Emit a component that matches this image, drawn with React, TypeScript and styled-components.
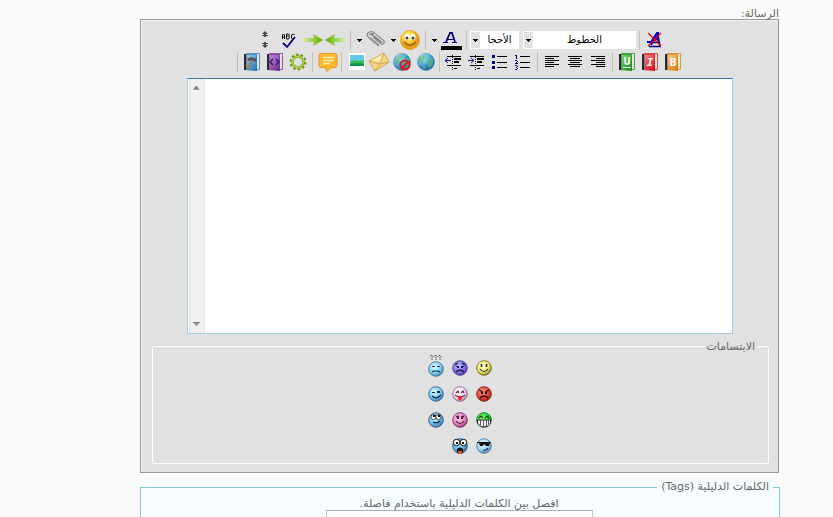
import React from "react";
import styled, { createGlobalStyle } from "styled-components";

const GlobalStyle = createGlobalStyle`
  * { box-sizing: border-box; }
  body {
    margin: 0;
    background: #fafafa;
    color: #666;
    font: 11px/14px "DejaVu Sans", Tahoma, sans-serif;
  }
`;

const Page = styled.main`
  height: 100vh;
  overflow: hidden;
  padding: 7px 53px 0 140px;
`;

const FieldLabel = styled.label`
  display: block;
  height: 12px;
  padding-right: 1px;
`;

const Editor = styled.section`
  margin-right: 1px;
  padding: 9px 8px 8px 10px;
  background: #e1e1e1;
  border: 1px solid #999;
  box-shadow: 1px 1px 0 #fff, inset 1px 1px 0 #f4f4f4;
`;

const ToolRow = styled.div<{ $start?: number; $end?: number }>`
  display: flex;
  justify-content: center;
  align-items: center;
  height: 22px;
  padding-right: ${(p) => p.$start ?? 0}px;
  padding-left: ${(p) => p.$end ?? 0}px;
`;

const ToolButton = styled.button<{ $w?: number }>`
  flex: none;
  width: ${(p) => p.$w ?? 23}px;
  height: 22px;
  padding: 0;
  border: 0;
  background: none;
  svg { display: block; }
`;

const Divider = styled.span<{ $w?: number }>`
  flex: none;
  display: flex;
  justify-content: center;
  width: ${(p) => p.$w ?? 6}px;
  height: 20px;
  &::before { content: ""; width: 1px; background: #c2c1b4; }
`;

const Picker = styled.label<{ $w: number }>`
  flex: none;
  display: flex;
  align-items: center;
  width: ${(p) => p.$w}px;
  height: 18px;
  padding-left: 1px;
  background: #fff;
  svg { flex: none; background: #e1e1e1; }
`;

const PickerSelect = styled.select`
  appearance: none;
  flex: 1;
  min-width: 0;
  height: 18px;
  padding: 0;
  border: 0;
  background: none;
  color: #000;
  font: 10px/16px "DejaVu Sans", Tahoma, sans-serif;
  text-align: center;
  text-align-last: center;
`;

const PickerGap = styled.span`
  width: 4px;
`;

const TextFrame = styled.div`
  display: flex;
  height: 256px;
  margin: 5px 37px 0 36px;
  background: #fff;
  border: 1px solid #a6cbe3;
  border-top-color: #3d7bad;
`;

const MessageArea = styled.textarea`
  flex: 1;
  min-width: 0;
  padding: 4px;
  border: 0;
  outline: 0;
  resize: none;
  overflow: hidden;
  background: #fff;
  font: inherit;
`;

const ScrollTrack = styled.div`
  display: flex;
  flex-direction: column;
  justify-content: space-between;
  align-items: center;
  width: 17px;
  padding: 6px 0;
  background: linear-gradient(90deg, #fff 1px, #e5e5e5 1px, #f0f0f0 4px, #f0f0f0 15px, #e8e8e8);
`;

const SmileyBox = styled.fieldset`
  min-width: 0;
  margin: 6px 1px 0;
  padding: 3px 15px 4px 13px;
  border: 1px solid #fff;
  border-radius: 2px;
  box-shadow: 0 0 0 1px #d5dfe8;
`;

const SmileyLegend = styled.legend`
  height: 12px;
  margin-right: -4px;
  padding: 0 2px;
  background: #e1e1e1;
`;

const SmileyGrid = styled.div`
  display: grid;
  grid-template-columns: repeat(3, 24px);
  grid-auto-rows: 26px;
  justify-content: center;
`;

const SmileyButton = styled.button`
  padding: 0;
  border: 0;
  background: none;
  svg { display: block; margin: 0 auto; }
`;

const TagsBox = styled.fieldset`
  min-width: 0;
  margin: 7px 0 0;
  padding: 3px 12px 12px 10px;
  background: #f7fdff;
  border: 1px solid #82cbd6;
  box-shadow: 0 -7px 0 #f8fcfd;
`;

const TagsLegend = styled.legend`
  height: 14px;
  margin-right: -6px;
  padding: 0 4px;
  background: #f7fdff;
`;

const TagsField = styled.label`
  display: flex;
  flex-direction: column;
  align-items: center;
  height: 40px;
`;

const TagsInput = styled.input`
  width: 267px;
  height: 22px;
  margin-top: -1px;
  border: 1px solid #c5c9cf;
  border-top-color: #abadb3;
  background: #fff;
`;

const Glyph = ({ children, w = 23 }: { children: React.ReactNode; w?: number }) => (
  <svg width={w} height="22" viewBox={`0 0 ${w} 22`} aria-hidden="true">{children}</svg>
);

const Tool = ({ label, w, children }: { label: string; w?: number; children: React.ReactNode }) => (
  <ToolButton type="button" aria-label={label} title={label} $w={w}>
    <Glyph w={w}>{children}</Glyph>
  </ToolButton>
);

const DropArrow = ({ label }: { label: string }) => (
  <Tool label={label} w={11}><path d="M3 10h5v1H7v1H6v1H5v-1H4v-1H3z" fill="#000" /></Tool>
);

const Gradient = ({ id, from, to }: { id: string; from: string; to: string }) => (
  <linearGradient id={id} x1="0" y1="0" x2="0.8" y2="1">
    <stop offset="0" stopColor={from} /><stop offset="1" stopColor={to} />
  </linearGradient>
);

const Book = ({ id, from, to, children }: { id: string; from: string; to: string; children: React.ReactNode }) => (
  <>
    <defs><Gradient id={id} from={from} to={to} /></defs>
    <path d="M6 2.500H19.500V18.500H17" fill="#e4e4dc" stroke={to} strokeOpacity=".75" />
    <path d="M4 3h13v17L4 19z" fill={`url(#${id})`} />
    <path d="M4 3.500h12.500V20" fill="none" stroke={to} strokeOpacity=".65" />
    <path d="M4 3h2v16H4z" fill="#2c2c2c" />
    <path d="M6.500 3v16" stroke="#777" strokeOpacity=".7" />
    {children}
  </>
);

const letterProps = {
  x: 12,
  textAnchor: "middle" as const,
  fontFamily: "DejaVu Sans Mono, monospace",
  fontWeight: 700,
  fontSize: 11,
  fill: "#fff",
};

const linesFor = (rows: number[][]) =>
  rows.map(([x, y, w], i) => <rect key={i} x={x} y={y} width={w} height="1" fill="#000" />);

const IndentLines = () => (
  <>
    <path d="M10.500 4v15" stroke="#111" strokeDasharray="1 1" />
    {linesFor([[5, 5, 14], [12, 7, 7], [12, 8, 7], [12, 10, 5], [12, 11, 5], [5, 14, 14], [12, 17, 3]])}
  </>
);

const Globe = ({ x = 0 }: { x?: number }) => (
  <g transform={`translate(${x} 0)`}>
    <defs>
      <radialGradient id={`globe${x}`} cx=".3" cy=".25" r=".75">
        <stop offset="0" stopColor="#d8f6ff" /><stop offset=".45" stopColor="#5bb9e4" /><stop offset="1" stopColor="#15649f" />
      </radialGradient>
    </defs>
    <circle cx="11" cy="11" r="8.500" fill={`url(#globe${x})`} stroke="#4a92bd" strokeWidth=".7" />
    <path d="M4 7l4-3 4 1-1 3-3 1 1 3-2 1-3-2zM12 10l4-4 2 2v6l-4 4-1-4zM7 14l3 1v3l-2-1z" fill="#5eb67c" opacity=".7" />
  </g>
);

const SmileGlyph = () => (
  <>
    <defs>
      <radialGradient id="bigSmile" cx=".4" cy=".3">
        <stop offset="0" stopColor="#fff8a4" /><stop offset=".55" stopColor="#ffd53d" /><stop offset="1" stopColor="#e99b11" />
      </radialGradient>
    </defs>
    <circle cx="11" cy="11" r="9.500" fill="url(#bigSmile)" stroke="#df9c28" strokeWidth=".8" />
    <ellipse cx="8" cy="8" rx="2.400" ry="3" fill="#fff" /><ellipse cx="14" cy="8" rx="2.400" ry="3" fill="#fff" />
    <circle cx="8" cy="9" r="1.500" fill="#345" /><circle cx="14" cy="9" r="1.500" fill="#345" />
    <path d="M5 13q6 6 12 0" fill="none" stroke="#975914" strokeWidth="1.300" />
  </>
);

const Caret = ({ up = false }: { up?: boolean }) => (
  <svg width="9" height="6" viewBox="0 0 9 6" aria-hidden="true">
    <path d={up ? "M1 5h7L5 1H4z" : "M1 1h7L5 5H4z"} fill="#999" />
    <path d={up ? "M2 4h3V1H4z" : "M1 1h7v1H1z"} fill="#777" />
  </svg>
);

type Face = { name: string; hi: string; mid: string; edge: string; art: React.ReactNode };
const line = { fill: "none", stroke: "#102344", strokeWidth: 1.2 };

const faces: Face[] = [
  { name: "smile", hi: "#ffffd5", mid: "#f4ec65", edge: "#756c20", art: <><path d="M5.500 4v3M10.500 4v3" stroke="#222" strokeWidth="1.500" /><path d="M4 9q4 5 8 0" {...line} /></> },
  { name: "sad", hi: "#c4bdff", mid: "#8270e3", edge: "#4b3995", art: <><path d="M3 5l3-2M10 3l3 2M4 6.500h3M9 6.500h3M4 12q4-4 8 0" {...line} /><path d="M5 6h2v2H5zM9 6h2v2H9z" fill="#182067" /></> },
  { name: "confused", hi: "#e2fcff", mid: "#7bd4f3", edge: "#3d7797", art: <><path d="M4 5.500h3M9 5.500h3M4 11l2-1h4l2 1" {...line} /></> },
  { name: "angry", hi: "#ff9885", mid: "#e34637", edge: "#851f16", art: <><path d="M3 4l4 2M9 6l4-2M4 12q4-4 8 0" {...line} stroke="#3b0905" /><path d="M5 6h2v2H5zM9 6h2v2H9z" fill="#280603" /></> },
  { name: "tongue", hi: "#fff", mid: "#f8ddf2", edge: "#92688e", art: <><path d="M4 7l2-2 1 2M9 7l2-2 1 2M3 9q5 4 10 0" {...line} stroke="#51314e" /><path d="M6 10h4v2l-1 2H7l-1-2z" fill="#ef171a" /></> },
  { name: "wink", hi: "#e1faff", mid: "#74c6f0", edge: "#346e98", art: <><path d="M4 6.500h3M4 10q4 4 9-1" {...line} /><path d="M9 5h3v2H9z" fill="#10233e" /></> },
  { name: "grin", hi: "#83ff65", mid: "#28ce36", edge: "#127a24", art: <><path d="M3 6l2-2 2 2M9 6l2-2 2 2" {...line} stroke="#104b18" /><path d="M1.500 8h13v3q-2 4-6.500 4t-6.500-4z" fill="#fff" stroke="#342b38" /><path d="M4.500 8v5M7.500 8v7M10.500 8v6M12.500 8v4" stroke="#342b38" strokeWidth=".8" /></> },
  { name: "blush", hi: "#ffcfec", mid: "#e886c3", edge: "#7b355f", art: <><path d="M4 5l2-1 1 1M9 5l2-1 1 1M4 9q4 5 8 0" {...line} stroke="#4a1937" /><path d="M5 5h2v2H5zM9 5h2v2H9z" fill="#541b41" /></> },
  { name: "rolleyes", hi: "#d9f6ff", mid: "#6ebcec", edge: "#346391", art: <><ellipse cx="5.500" cy="5" rx="2.500" ry="2.500" fill="#fff" stroke="#111" strokeWidth=".7" /><ellipse cx="10.500" cy="5" rx="2.500" ry="2.500" fill="#fff" stroke="#111" strokeWidth=".7" /><path d="M5 3h2v2H5zM10 3h2v2h-2z" fill="#111" /><path d="M5 10q4 2 7-1" {...line} /></> },
  { name: "cool", hi: "#f4ffff", mid: "#9dd1f5", edge: "#557ca0", art: <><path d="M1 4h14v1h-1l-1 3h-3L8 6 7 8H4L3 5H1z" fill="#111" /><path d="M7 12q3 1 5-2" {...line} /></> },
  { name: "shock", hi: "#b2e6ff", mid: "#66b2df", edge: "#285a82", art: <><circle cx="4.500" cy="4.500" r="3.200" fill="#fff" stroke="#111" /><circle cx="11.500" cy="4.500" r="3.200" fill="#fff" stroke="#111" /><path d="M4 4h2v2H4zM10 4h2v2h-2zM5 11q3-3 6 0v3l-2 2H7l-2-2z" fill="#111" /><path d="M6 13h4v1l-1 2H7l-1-2z" fill="#f25a21" /></> },
];

const Smiley = ({ face }: { face: Face }) => (
  <SmileyButton type="button" aria-label={face.name}>
    <svg width="24" height="26" viewBox="0 0 24 26">
      <defs>
        <radialGradient id={`face-${face.name}`} cx=".4" cy=".35" r=".7">
          <stop offset="0" stopColor={face.hi} /><stop offset=".6" stopColor={face.mid} /><stop offset="1" stopColor={face.edge} />
        </radialGradient>
      </defs>
      <g transform={face.name === "confused" ? "translate(4 6)" : "translate(4 5)"}>
        <circle cx="8" cy="8" r="7.300" fill={`url(#face-${face.name})`} stroke={face.edge} strokeWidth=".9" />
        {face.art}
      </g>
      {face.name === "confused" && (
        <path d="M6 1.500l1-1h1l1 1-1 1v1M10 1.500l1-1h1l1 1-1 1v1M14 1.500l1-1h1l1 1-1 1v1M8 4v1M12 4v1M16 4v1" fill="none" stroke="#333" strokeWidth=".8" />
      )}
    </svg>
  </SmileyButton>
);

const SelectBox = ({ label, text, w }: { label: string; text: string; w: number }) => (
  <Picker $w={w} dir="rtl">
    <PickerSelect aria-label={label}><option>{text}</option></PickerSelect>
    <svg width="9" height="16" viewBox="0 0 9 16" aria-hidden="true">
      <path d="M2 7h5v1H6v1H5v1H4V9H3V8H2z" fill="#000" />
    </svg>
  </Picker>
);

export default function App() {
  return (
    <Page dir="rtl">
      <GlobalStyle />
      <FieldLabel htmlFor="message">الرسالة:</FieldLabel>
      <Editor>
        <ToolRow $end={2}>
          <Tool label="إزالة التنسيق">
            <path d="M4 13h4l6-9h1v8M9 10h6" fill="none" stroke="#0000f0" strokeWidth="2" />
            <path d="M8 16l6-9h1l2 10M10 13.500h6M6 17.500h12" fill="none" stroke="#00008c" strokeWidth="1.600" />
            <path d="M5 4l13 13M18 4L5 17" stroke="#e80000" strokeWidth="1.200" />
          </Tool>
          <Divider $w={7} />
          <SelectBox label="الخطوط" text="الخطوط" w={113} />
          <PickerGap />
          <SelectBox label="الأحجام" text="الأحجا" w={49} />
          <Divider $w={7} />
          <Tool label="لون النص">
            <path d="M6 13l4-9h2l3 9" fill="none" stroke="#00007d" strokeWidth="1.800" />
            <path d="M7 10.500h7M3 13.500h5M12 13.500h5M9 3.500h4" stroke="#00007d" />
            <path d="M1 17h21v4H1z" fill="#000" />
          </Tool>
          <DropArrow label="قائمة الألوان" />
          <Divider $w={7} />
          <Tool label="ابتسامات"><SmileGlyph /></Tool>
          <DropArrow label="قائمة الابتسامات" />
          <Tool label="مرفقات">
            <path d="M8 8l8 7q2 1 3-1t-1-3L8 3Q5 2 3 4t1 5l10 8M6 5l11 9M4 6l5-2" fill="none" stroke="#8b8b8b" strokeWidth="1.300" />
            <path d="M5 4l12 9M5 8l9 8" fill="none" stroke="#555" strokeWidth=".6" />
          </Tool>
          <DropArrow label="قائمة المرفقات" />
          <Divider $w={7} />
          <Tool label="من اليمين إلى اليسار" w={22}>
            <defs><linearGradient id="arrL"><stop stopColor="#5faa08" /><stop offset=".4" stopColor="#8cc832" /><stop offset="1" stopColor="#d9efa8" /></linearGradient></defs>
            <path d="M0 11l10-6-1 4h11v4H9l1 4z" fill="url(#arrL)" />
          </Tool>
          <Tool label="من اليسار إلى اليمين" w={22}>
            <defs><linearGradient id="arrR"><stop stopColor="#d9efa8" /><stop offset=".6" stopColor="#8cc832" /><stop offset="1" stopColor="#5faa08" /></linearGradient></defs>
            <path d="M20 11l-10-6 1 4H0v4h11l-1 4z" fill="url(#arrR)" />
          </Tool>
          <Tool label="تدقيق إملائي">
            <path d="M2.500 10V6l1-1 1 1v4M2.500 8h2M6.500 10V5h2l1 1-1 1h-2M8.500 7l1 1-1 2h-2M14.500 6l-1-1-2 1v3l1 1 2-1" fill="none" stroke="#111" />
            <path d="M3 14l4 4 8-10" fill="none" stroke="#000087" strokeWidth="1.800" />
          </Tool>
          <Tool label="تغيير حجم المحرر">
            <path d="M8 2l3 3H9v1h2v1H9v1H7V7H5V6h2V5H5zM7 13h2v1h2v1H9v1h2l-3 3-3-3h2v-1H5v-1h2z" fill="#4b4b4b" />
          </Tool>
        </ToolRow>

        <ToolRow $start={3}>
          <Tool label="عريض"><Book id="bookB" from="#ffdca0" to="#df7c0c"><text {...letterProps} y="15">B</text></Book></Tool>
          <Tool label="مائل"><Book id="bookI" from="#ff9090" to="#d8141f"><text {...letterProps} y="15" fontStyle="italic">I</text></Book></Tool>
          <Tool label="تحته خط"><Book id="bookU" from="#8cdc86" to="#18931f"><text {...letterProps} y="14">U</text><path d="M8 16.500h8" stroke="#fff" /></Book></Tool>
          <Divider />
          <Tool label="محاذاة لليمين">{linesFor([[5, 5, 14], [10, 7, 9], [5, 9, 14], [10, 11, 9], [5, 13, 14], [10, 15, 9]])}</Tool>
          <Tool label="توسيط">{linesFor([[5, 5, 14], [7, 7, 10], [5, 9, 14], [7, 11, 10], [5, 13, 14], [7, 15, 10]])}</Tool>
          <Tool label="محاذاة لليسار">{linesFor([[5, 5, 14], [5, 7, 9], [5, 9, 14], [5, 11, 9], [5, 13, 14], [5, 15, 9]])}</Tool>
          <Divider />
          <Tool label="قائمة مرقمة">
            <path d="M5 4h1v4H5zM4 4h1v1H4zM4 9h2v1H4zM6 10h1v1H6zM5 11h1v1H5zM4 12h3v1H4zM4 14h2v1H4zM6 15h1v1H6zM5 16h1v1H5zM6 17h1v1H6zM4 18h2v1H4z" fill="#000087" />
            {linesFor([[9, 5, 10], [9, 11, 10], [9, 16, 10]])}
          </Tool>
          <Tool label="قائمة نقطية">
            <path d="M4 4h3v3H4zM4 10h3v3H4zM4 15h3v3H4z" fill="#000087" />
            {linesFor([[9, 5, 10], [9, 11, 10], [9, 16, 10]])}
          </Tool>
          <Tool label="زيادة المسافة"><IndentLines /><path d="M3 9.500h6M6 7l3 2.500L6 12" fill="none" stroke="#16168a" /></Tool>
          <Tool label="إنقاص المسافة"><IndentLines /><path d="M3 9.500h6M6 7L3 9.500 6 12" fill="none" stroke="#16168a" /></Tool>
          <Divider />
          <Tool label="إدراج رابط"><Globe x={2} /></Tool>
          <Tool label="إزالة الرابط">
            <Globe x={1} />
            <circle cx="15" cy="14" r="4.600" fill="none" stroke="#e0151a" strokeWidth="2" /><path d="M18 11l-6 6" stroke="#e0151a" strokeWidth="2" />
          </Tool>
          <Tool label="بريد إلكتروني">
            <path d="M2 10L17 2l5 9L8 20z" fill="#f5d781" stroke="#c9a457" />
            <path d="M2 10l11 3 4-11M8 20l5-7 9-2" fill="none" stroke="#cfa95c" /><path d="M5 9l11-6-4 8z" fill="#ffefb5" />
          </Tool>
          <Tool label="إدراج صورة">
            <path d="M5 2h16v17H5z" fill="#fff" /><path d="M6 4h14v11H6z" fill="#64caed" />
            <path d="M6 11q4-3 8-1l6-1v6H6z" fill="#35c04c" /><path d="M6 13q8-2 14 0v2H6z" fill="#12924a" />
          </Tool>
          <Divider />
          <Tool label="اقتباس">
            <path d="M5 2.500h15q2 0 2 2v10q0 2-2 2h-4l-4 4-2-4H6q-2 0-2-2v-10q0-2 1-2z" fill="#ffb82e" stroke="#e39a26" />
            <path d="M8 6.500h11M8 9.500h11M8 12.500h7" stroke="#fff1ad" strokeWidth="1.500" />
          </Tool>
          <Divider />
          <Tool label="كود">
            <circle cx="12" cy="11" r="7.300" fill="none" stroke="#6f9a16" strokeWidth="2.400" strokeDasharray="2.500 2.090" />
            <circle cx="12" cy="11" r="5.500" fill="none" stroke="#7ba51f" strokeWidth="2.400" />
            <circle cx="12" cy="11" r="5.600" fill="none" stroke="#b4d64c" strokeWidth="1.200" />
          </Tool>
          <Tool label="HTML"><Book id="bookC" from="#c795e6" to="#713096"><path d="M10 8l-3 3 3 3M13 8l3 3-3 3" fill="none" stroke="#3d0f60" strokeWidth="1.300" /></Book></Tool>
          <Tool label="PHP"><Book id="bookP" from="#a4d7f4" to="#2879b8"><path d="M12 9L8 18" stroke="#a87d4e" strokeWidth="2" /><path d="M7 8l4-2 6 2-1 3-4-2-4 1z" fill="#505458" /></Book></Tool>
          <Divider />
        </ToolRow>

        <TextFrame>
          <MessageArea id="message" />
          <ScrollTrack aria-hidden="true"><Caret up /><Caret /></ScrollTrack>
        </TextFrame>

        <SmileyBox>
          <SmileyLegend>الابتسامات</SmileyLegend>
          <SmileyGrid>{faces.map((face) => <Smiley key={face.name} face={face} />)}</SmileyGrid>
        </SmileyBox>
      </Editor>

      <TagsBox>
        <TagsLegend>الكلمات الدليلية (Tags)</TagsLegend>
        <TagsField>
          افصل بين الكلمات الدليلية باستخدام فاصلة.
          <TagsInput type="text" />
        </TagsField>
      </TagsBox>
    </Page>
  );
}
